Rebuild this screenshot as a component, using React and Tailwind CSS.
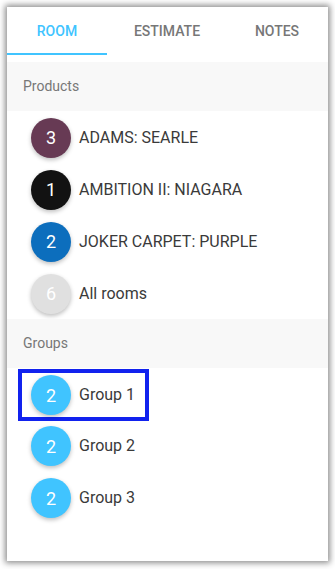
import { useState } from 'react';

const TABS = ['ROOM', 'ESTIMATE', 'NOTES'];

const PRODUCTS = [
    { count: 3, label: 'ADAMS: SEARLE',         color: 'bg-[#673a54]' },
    { count: 1, label: 'AMBITION II: NIAGARA',  color: 'bg-[#121212]' },
    { count: 2, label: 'JOKER CARPET: PURPLE',  color: 'bg-[#0c6ebd]' },
    { count: 6, label: 'All rooms',             color: 'bg-[#e0e0e0]' },
];

const GROUPS = ['Group 1', 'Group 2', 'Group 3'];

function Dot({ count, color }) {
    return (
        <span className={`flex h-10 w-10 shrink-0 items-center justify-center rounded-full text-[18px] text-white shadow-[0_2px_4px_rgba(0,0,0,0.25)] ${color}`}>
            {count}
        </span>
    );
}

function SectionHeader({ children }) {
    return (
        <div className="flex h-[49px] items-center bg-[#f8f8f8] px-4 text-[14px] text-[#777]">
            {children}
        </div>
    );
}

export default function App() {
    const [active, setActive] = useState('ROOM');

    return (
        <div className="h-[569px] bg-white p-[7px] font-['Roboto',sans-serif]">
            <div className="flex h-[554px] flex-col bg-white shadow-[0_0_6px_2px_rgba(0,0,0,0.45)]">

                {/* Tabs */}
                <div className="flex h-[55px] shrink-0 gap-[10px] pb-[7px]">
                    {TABS.map((tab) => {
                        const isActive = tab === active;
                        return (
                            <button
                                key={tab}
                                onClick={() => setActive(tab)}
                                className={[
                                    'flex w-[100px] items-center justify-center border-b-2 pt-[2px] text-[14px] font-medium',
                                    isActive ? 'border-[#40c4ff] text-[#40c4ff]' : 'border-transparent text-[#777]',
                                ].join(' ')}
                            >
                                {tab}
                            </button>
                        );
                    })}
                </div>

                <SectionHeader>Products</SectionHeader>
                {PRODUCTS.map((p) => (
                    <div key={p.label} className="flex h-[52px] shrink-0 items-center gap-2 pl-6 pt-[1px] text-[16px] text-[#3a3a3a]">
                        <Dot count={p.count} color={p.color} />
                        <span>{p.label}</span>
                    </div>
                ))}

                <SectionHeader>Groups</SectionHeader>
                {GROUPS.map((g, i) => (
                    i === 0 ? (
                        <div key={g} className="flex h-[52px] shrink-0 items-center pl-[11px] pt-[2px]">
                            <div className="flex items-center gap-2 border-4 border-[#1122ee] py-[2px] pl-[9px] pr-[10px] text-[16px] text-[#3a3a3a]">
                                <Dot count={2} color="bg-[#40c4ff]" />
                                <span>{g}</span>
                            </div>
                        </div>
                    ) : (
                        <div key={g} className="flex h-[52px] shrink-0 items-center gap-2 pl-6 text-[16px] text-[#3a3a3a]">
                            <Dot count={2} color="bg-[#40c4ff]" />
                            <span>{g}</span>
                        </div>
                    )
                ))}
            </div>
        </div>
    );
}
